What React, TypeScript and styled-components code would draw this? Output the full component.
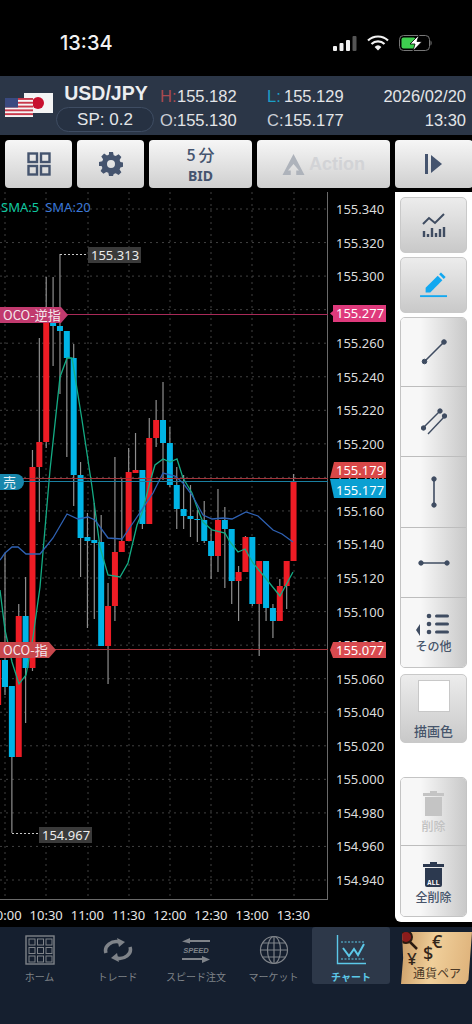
import React from 'react';
import styled, { createGlobalStyle } from 'styled-components';

const SANS = `"Liberation Sans", "Noto Sans CJK JP", sans-serif`;
const NOTO = `"Noto Sans", "Noto Sans CJK JP", sans-serif`;
const CJK = `"Noto Sans CJK JP", sans-serif`;

// idx, wick top, body top, body bottom, wick bottom, up?
type Candle = [number, number, number, number, number, boolean];
const candles: Candle[] = [
  [-1, 650, 660, 705, 705, true],
  [0, 553, 660, 687, 695, false],
  [1, 686, 686, 757, 833, false],
  [2, 604, 616, 757, 757, true],
  [3, 577, 616, 668, 723, false],
  [4, 450, 467, 668, 671, true],
  [5, 338, 442, 467, 522, true],
  [6, 277, 315, 442, 448, true],
  [7, 277, 318, 326, 366, false],
  [8, 254, 326, 331, 394, false],
  [9, 331, 331, 358, 457, false],
  [10, 344, 358, 475, 506, false],
  [11, 462, 475, 538, 577, false],
  [12, 513, 537, 541, 628, false],
  [13, 503, 540, 543, 619, false],
  [14, 515, 542, 646, 646, false],
  [15, 583, 606, 646, 684, true],
  [16, 457, 552, 606, 621, true],
  [17, 479, 541, 552, 552, true],
  [18, 448, 472, 541, 541, true],
  [19, 433, 470, 473, 473, true],
  [20, 470, 470, 524, 529, false],
  [21, 418, 438, 524, 524, true],
  [22, 400, 420, 438, 447, true],
  [23, 382, 420, 443, 480, false],
  [24, 427, 443, 485, 487, false],
  [25, 467, 485, 509, 529, false],
  [26, 475, 509, 516, 529, false],
  [27, 485, 516, 519, 537, false],
  [28, 510, 519, 520, 542, false],
  [29, 501, 520, 541, 543, false],
  [30, 530, 541, 556, 579, false],
  [31, 489, 520, 556, 572, true],
  [32, 507, 520, 529, 588, false],
  [33, 529, 529, 581, 604, false],
  [34, 566, 572, 581, 621, true],
  [35, 536, 537, 572, 572, true],
  [36, 537, 537, 604, 606, false],
  [37, 561, 561, 604, 656, true],
  [38, 561, 561, 608, 621, false],
  [39, 604, 608, 621, 638, false],
  [40, 579, 586, 621, 621, true],
  [41, 561, 561, 586, 609, true],
  [42, 474, 482, 561, 561, true],
];

const sma5 =
  '0,590 5,630 12,662 19,684 26,675 33,637 40,587 50,470 60,377 67,358 72,358 82,420 92,487 100,547 108,575 120,577 128,563 137,525 142,513 150,482 155,465 163,459 170,462 177,459 183,478 192,493 198,510 203,522 212,530 225,533 230,542 238,552 245,549 253,563 263,575 280,596 293,572';
const sma20 =
  '0,560 5,553 12,547 18,547 26,554 40,554 53,538 67,514 78,519 88,517 95,520 108,538 122,539 137,517 153,493 163,473 175,476 183,483 192,495 203,515 212,519 223,518 232,519 246,512 258,516 273,530 282,534 293,542';

const prices = ['155.340', '155.320', '155.300', '155.280', '155.260', '155.240', '155.220', '155.200', '155.180', '155.160', '155.140', '155.120', '155.100', '155.080', '155.060', '155.040', '155.020', '155.000', '154.980', '154.960', '154.940'];
const times = ['10:00', '10:30', '11:00', '11:30', '12:00', '12:30', '13:00', '13:30'];
const gridX = [5, 46, 88, 129, 170, 211, 252, 294];
const gridY = prices.map((_, i) => 209 + i * 33.55);

const GlobalStyle = createGlobalStyle`
  html, body { margin: 0; padding: 0; background: #000; }
  * { box-sizing: border-box; }
`;

const Page = styled.div`
  width: 472px;
  height: 1024px;
  background: #000;
  overflow: hidden;
  display: flex;
  flex-direction: column;
  position: relative;
  font-family: ${SANS};
`;

const StatusBar = styled.div`
  height: 76px;
  flex: none;
  display: flex;
  align-items: flex-start;
  justify-content: space-between;
  padding: 32px 39px 0 60px;
  color: #f2f2f2;
`;

const Clock = styled.div`
  font-size: 20px;
  line-height: 23px;
  font-weight: 500;
  font-family: "Inter", ${SANS};
`;

const StatusIcons = styled.div`
  display: flex;
  align-items: center;
  gap: 10px;
  height: 22px;
`;

const Header = styled.div`
  height: 59px;
  flex: none;
  background: #2b3647;
  display: flex;
  color: #e3e5e8;
`;

const Flags = styled.svg`
  width: 56px;
  height: 59px;
  flex: none;
`;

const PairColumn = styled.div`
  width: 100px;
  flex: none;
  display: flex;
  flex-direction: column;
  align-items: center;
  padding-top: 5px;
`;

const PairName = styled.div`
  font-size: 19.5px;
  line-height: 24px;
  font-weight: 700;
  color: #eceef0;
  margin-left: 0;
`;

const Spread = styled.div`
  width: 98px;
  height: 25px;
  border: 1px solid #3f4d63;
  border-radius: 13px;
  background: #263142;
  text-align: center;
  font-size: 17px;
  line-height: 23px;
  margin-top: 2px;
  margin-left: -2px;
`;

const QuoteGrid = styled.div`
  flex: none;
  width: 316px;
  padding: 8px 6px 0 4px;
  display: grid;
  grid-template-columns: 107px 100px 1fr;
  grid-auto-rows: 24px;
  font-size: 16.5px;
  line-height: 24px;
`;

const Quote = styled.div`
  white-space: nowrap;
`;

const QuoteKey = styled.span<{ $color?: string }>`
  color: ${(p) => p.$color || '#c9ced6'};
  display: inline-block;
  width: 17px;
`;

const DateCell = styled.div`
  text-align: right;
  white-space: nowrap;
`;

const Toolbar = styled.div`
  height: 57px;
  flex: none;
  display: flex;
  gap: 5px;
  padding: 5px 0 4px 5px;
`;

const ToolButton = styled.div<{ $w: number }>`
  width: ${(p) => p.$w}px;
  flex: none;
  border-radius: 4px;
  background: linear-gradient(#f6f6f6, #cfcfcf);
  color: #45546e;
  display: flex;
  flex-direction: column;
  align-items: center;
  justify-content: center;
`;

const ToolTop = styled.div`
  font-size: 16px;
  line-height: 20px;
  font-weight: 500;
  font-family: ${CJK};
  letter-spacing: 3px;
  margin-right: -3px;
`;

const ToolBottom = styled.div`
  font-size: 14px;
  line-height: 18px;
  font-weight: 700;
  font-family: ${NOTO};
  margin-top: 3px;
`;

const ActionButton = styled(ToolButton)`
  flex-direction: row;
  gap: 4px;
  color: #d2d3d6;
  font-size: 18px;
  font-weight: 700;
  font-family: ${SANS};
`;

const Main = styled.div`
  flex: 1;
  display: flex;
  min-height: 0;
`;

const ChartColumn = styled.div`
  width: 395px;
  flex: none;
  position: relative;
  display: flex;
  flex-direction: column;
`;

const ChartRow = styled.div`
  height: 708px;
  flex: none;
  display: flex;
`;

const Plot = styled.svg`
  width: 328px;
  height: 708px;
  flex: none;
  display: block;
`;

const PriceAxis = styled.div`
  flex: 1;
  padding: 7px 0 0 8px;
  font-family: ${NOTO};
  font-size: 13px;
  color: #dcdcdc;
`;

const PriceLabel = styled.div`
  height: 33.55px;
  line-height: 20px;
`;

const TimeAxis = styled.div`
  width: 328px;
  display: flex;
  margin-left: -15.6px;
  padding-top: 5px;
  font-family: ${NOTO};
  font-size: 13px;
  line-height: 20px;
  color: #e6e6e6;
`;

const TimeLabel = styled.div`
  width: 41.2px;
  flex: none;
  text-align: center;
`;

const Legend = styled.div`
  position: absolute;
  left: 1px;
  top: 7px;
  display: flex;
  gap: 6px;
  font-family: ${NOTO};
  font-size: 13px;
  line-height: 16px;
`;

const LegendItem = styled.span<{ $color: string }>`
  color: ${(p) => p.$color};
`;

const ValueTag = styled.div<{ $left: number; $top: number }>`
  position: absolute;
  left: ${(p) => p.$left}px;
  top: ${(p) => p.$top}px;
  height: 16px;
  padding: 0 2px 0 3px;
  background: #3a3a3a;
  color: #ececec;
  font-family: ${NOTO};
  font-size: 13px;
  line-height: 16px;
`;

const OrderTag = styled.div<{ $top: number; $bg: string; $w: number }>`
  position: absolute;
  left: 0;
  top: ${(p) => p.$top}px;
  width: ${(p) => p.$w}px;
  height: 16px;
  background: ${(p) => p.$bg};
  clip-path: polygon(0 0, calc(100% - 7px) 0, 100% 50%, calc(100% - 7px) 100%, 0 100%);
  color: #f4e8ec;
  font-family: ${CJK};
  font-size: 13px;
  line-height: 16px;
  padding-left: 3px;
  white-space: nowrap;
`;

const SellTag = styled.div`
  position: absolute;
  left: 0;
  top: 282px;
  width: 24px;
  height: 16px;
  background: #1786ab;
  border-radius: 0 8px 8px 0;
  color: #e8f4f8;
  font-family: ${CJK};
  font-size: 13px;
  line-height: 16px;
  padding-left: 3px;
`;

const AxisTag = styled.div<{ $top: number; $h: number; $bg: string; $clip: string; $pt?: number }>`
  position: absolute;
  left: 330px;
  top: ${(p) => p.$top}px;
  width: 56px;
  height: ${(p) => p.$h}px;
  background: ${(p) => p.$bg};
  clip-path: polygon(${(p) => p.$clip});
  color: #fff;
  font-family: ${NOTO};
  font-size: 13px;
  line-height: 16px;
  padding: ${(p) => p.$pt || 0}px 0 0 6px;
`;

const SidePanel = styled.div`
  width: 77px;
  height: 730px;
  flex: none;
  background: #fff;
  border-radius: 0 0 0 6px;
  padding: 5px;
  display: flex;
  flex-direction: column;
`;

const SideButton = styled.div<{ $h: number; $mt?: number }>`
  height: ${(p) => p.$h}px;
  margin-top: ${(p) => p.$mt || 0}px;
  flex: none;
  border: 1px solid #c9c9c9;
  border-radius: 5px;
  background: linear-gradient(#ececec, #c9c9c9);
  display: flex;
  flex-direction: column;
  align-items: center;
  justify-content: center;
`;

const SideGroup = styled.div<{ $mt: number }>`
  margin-top: ${(p) => p.$mt}px;
  flex: none;
  border: 1px solid #c4c4c4;
  border-radius: 5px;
  overflow: hidden;
  display: flex;
  flex-direction: column;
`;

const GroupCell = styled.div<{ $h: number; $pt?: number }>`
  height: ${(p) => p.$h}px;
  flex: none;
  padding-top: ${(p) => p.$pt || 0}px;
  background: linear-gradient(90deg, #f7f7f7 30%, #c9c9c9);
  border-bottom: 1px solid #bdbdbd;
  display: flex;
  flex-direction: column;
  align-items: center;
  justify-content: center;
  &:last-child { border-bottom: 0; }
`;

const SideLabel = styled.div<{ $dim?: boolean; $size?: number }>`
  font-family: ${CJK};
  font-size: ${(p) => p.$size || 12}px;
  line-height: 15px;
  font-weight: 500;
  margin-top: 2px;
  color: ${(p) => (p.$dim ? '#c2c2c2' : '#47556b')};
`;

const Swatch = styled.div`
  width: 32px;
  height: 32px;
  background: #fff;
  border: 1px solid #c8c8c8;
  margin-bottom: 9px;
`;

const TabBar = styled.div`
  position: absolute;
  left: 0;
  top: 927px;
  width: 472px;
  height: 97px;
  background: #151f2f;
  display: flex;
  align-items: flex-start;
  padding-left: 1px;
`;

const Tab = styled.div<{ $w: number; $active?: boolean }>`
  width: ${(p) => p.$w}px;
  height: 57px;
  flex: none;
  border-radius: 3px;
  background: ${(p) => (p.$active ? '#2d3849' : 'transparent')};
  color: ${(p) => (p.$active ? '#5cc8e8' : '#7f8389')};
  display: flex;
  flex-direction: column;
  align-items: center;
  padding-top: 8px;
  font-family: ${CJK};
  font-size: 10px;
  font-weight: ${(p) => (p.$active ? 700 : 400)};
  line-height: 14px;
  white-space: nowrap;
`;

const TabIcon = styled.svg`
  width: 30px;
  height: 30px;
  margin-bottom: 5px;
  flex: none;
`;

const PairTab = styled.div`
  position: absolute;
  left: 401px;
  top: 5px;
  width: 71px;
  height: 52px;
  background: linear-gradient(100deg, #c99a63, #f0cf9a 45%, #ddb078);
  clip-path: polygon(1px 0, 100% 0, 95% 92%, 91% 100%, 0 100%, 3% 50%);
  font-family: ${CJK};
`;

const PairCaption = styled.div`
  position: absolute;
  left: 12px;
  bottom: 4px;
  font-size: 12px;
  line-height: 15px;
  color: #4a3826;
  white-space: nowrap;
`;

const Currency = styled.span<{ $x: number; $y: number; $s: number }>`
  position: absolute;
  left: ${(p) => p.$x}px;
  top: ${(p) => p.$y}px;
  font-size: ${(p) => p.$s}px;
  line-height: 1;
  font-weight: 500;
  font-family: ${NOTO};
  color: #33261a;
`;

const Lens = styled.svg`
  position: absolute;
  left: 0;
  top: 0;
  width: 20px;
  height: 18px;
`;

const candleX = (i: number) => 5 + 6.87 * i;

function ChartSvg() {
  return (
    <Plot viewBox="0 192 328 708">
      {gridY.map((y) => (
        <line key={y} x1={0} x2={327} y1={y} y2={y} stroke="#404040" strokeDasharray="2 4" />
      ))}
      {gridX.map((x) => (
        <line key={x} x1={x} x2={x} y1={192} y2={900} stroke="#404040" strokeDasharray="2 4" />
      ))}
      <line x1={327.5} x2={327.5} y1={192} y2={900} stroke="#6a6a6a" />
      <line x1={0} x2={328} y1={899.5} y2={899.5} stroke="#6a6a6a" />
      {candles.map(([i, wt, bt, bb, wb, up]) => {
        const x = candleX(i);
        return (
          <g key={i}>
            <line x1={x} x2={x} y1={wt} y2={wb} stroke="#8e8e8e" strokeWidth={1.2} />
            <rect x={x - 3} y={bt} width={6} height={Math.max(bb - bt, 1)} fill={up ? '#ee1c25' : '#00b4e6'} />
          </g>
        );
      })}
      <polyline points="60,254.5 88,254.5" fill="none" stroke="#c8c8c8" strokeDasharray="2 2" />
      <polyline points="12,833.5 40,833.5" fill="none" stroke="#c8c8c8" strokeDasharray="2 2" />
      <polyline points={sma5} fill="none" stroke="#14ac85" strokeWidth={1.3} />
      <polyline points={sma20} fill="none" stroke="#2f62b4" strokeWidth={1.3} />
      <line x1={0} x2={328} y1={314.5} y2={314.5} stroke="#a82a58" />
      <line x1={0} x2={328} y1={649.5} y2={649.5} stroke="#a0343a" />
      <line x1={0} x2={328} y1={478.5} y2={478.5} stroke="#a0343a" />
      <line x1={0} x2={328} y1={481.5} y2={481.5} stroke="#1a7fa0" />
    </Plot>
  );
}

const App = () => (
  <>
    <GlobalStyle />
    <Page>
      <StatusBar>
        <Clock>13:34</Clock>
        <StatusIcons>
          <svg width="24" height="15" viewBox="0 0 24 15">
            <rect x="0" y="10" width="4" height="5" rx="1" fill="#f2f2f2" />
            <rect x="6.5" y="7" width="4" height="8" rx="1" fill="#f2f2f2" />
            <rect x="13" y="4" width="4" height="11" rx="1" fill="#f2f2f2" />
            <rect x="19.5" y="0" width="4" height="15" rx="1" fill="#555" />
          </svg>
          <svg width="22" height="16" viewBox="0 0 22 16">
            <path d="M1 5.5a14.5 14.5 0 0 1 20 0" fill="none" stroke="#f2f2f2" strokeWidth="2.2" />
            <path d="M4.5 9a9.5 9.5 0 0 1 13 0" fill="none" stroke="#f2f2f2" strokeWidth="2.2" />
            <path d="M11 15.5l-3.4-3.6a5 5 0 0 1 6.8 0z" fill="#f2f2f2" />
          </svg>
          <svg width="34" height="16" viewBox="0 0 34 16">
            <rect x="0.5" y="0.5" width="30" height="15" rx="4" fill="none" stroke="#777" />
            <rect x="2.5" y="2.5" width="14" height="11" rx="2" fill="#3ecf4f" />
            <path d="M31.5 5.5c1.5.4 1.5 4.6 0 5z" fill="#777" />
            <path d="M20 0L11 9h5l-2 7 9-9.5h-5z" fill="#fff" stroke="#000" strokeWidth="0.8" />
          </svg>
        </StatusIcons>
      </StatusBar>

      <Header>
        <Flags viewBox="0 0 56 59">
          <rect x="24" y="17" width="29" height="20" fill="#f4f4f4" />
          <circle cx="38" cy="27" r="6" fill="#c8102e" />
          <rect x="5" y="22" width="28" height="19" fill="#f5f5f5" />
          {[0, 2, 4, 6, 8].map((s) => (
            <rect key={s} x="5" y={22 + s * 1.9} width="28" height="1.9" fill="#c8384a" />
          ))}
          <rect x="5" y="22" width="13" height="9.5" fill="#3a4a80" />
        </Flags>
        <PairColumn>
          <PairName>USD/JPY</PairName>
          <Spread>SP: 0.2</Spread>
        </PairColumn>
        <QuoteGrid>
          <Quote><QuoteKey $color="#a84a50">H:</QuoteKey>155.182</Quote>
          <Quote><QuoteKey $color="#1b9fc7">L:</QuoteKey>155.129</Quote>
          <DateCell>2026/02/20</DateCell>
          <Quote><QuoteKey>O:</QuoteKey>155.130</Quote>
          <Quote><QuoteKey>C:</QuoteKey>155.177</Quote>
          <DateCell>13:30</DateCell>
        </QuoteGrid>
      </Header>

      <Toolbar>
        <ToolButton $w={67}>
          <svg width="24" height="24" viewBox="0 0 24 24" fill="none" stroke="#45546e" strokeWidth="2.4">
            <rect x="1.5" y="1.5" width="8.5" height="8.5" />
            <rect x="14" y="1.5" width="8.5" height="8.5" />
            <rect x="1.5" y="14" width="8.5" height="8.5" />
            <rect x="14" y="14" width="8.5" height="8.5" />
          </svg>
        </ToolButton>
        <ToolButton $w={67}>
          <svg width="24" height="24" viewBox="0 0 24 24" fill="#45546e">
            <path fillRule="evenodd" d="M10 0h4l.7 3.3 2 .8L19.600 2.300l2.800 2.800-1.800 2.900.8 2 3.300.700v4l-3.300.700-.8 2 1.800 2.900-2.800 2.800-2.900-1.800-2 .8L14 24h-4l-.7-3.300-2-.8-2.900 1.800-2.800-2.800 1.800-2.900-.8-2L0 14v-4l3.300-.7.8-2L2.300 4.400l2.800-2.800L8 3.400l2-.8zM12 8a4 4 0 1 0 0 8 4 4 0 0 0 0-8z" />
          </svg>
        </ToolButton>
        <ToolButton $w={103}>
          <ToolTop>5分</ToolTop>
          <ToolBottom>BID</ToolBottom>
        </ToolButton>
        <ActionButton $w={133}>
          <svg width="23" height="22" viewBox="0 0 24 24" fill="#aeb3bb">
            <path fillRule="evenodd" d="M12 1L24 24H15V19H18L12 12L6 19H9V24H0z" />
          </svg>
          Action
        </ActionButton>
        <ToolButton $w={78}>
          <svg width="18" height="20" viewBox="0 0 18 20" fill="#45546e">
            <rect x="0" y="0" width="3" height="20" />
            <path d="M6 1l11 9-11 9z" />
          </svg>
        </ToolButton>
      </Toolbar>

      <Main>
        <ChartColumn>
          <ChartRow>
            <ChartSvg />
            <PriceAxis>
              {prices.map((p) => (
                <PriceLabel key={p}>{p}</PriceLabel>
              ))}
            </PriceAxis>
          </ChartRow>
          <TimeAxis>
            {times.map((t) => (
              <TimeLabel key={t}>{t}</TimeLabel>
            ))}
          </TimeAxis>
          <Legend>
            <LegendItem $color="#10c9a0">SMA:5</LegendItem>
            <LegendItem $color="#3a78d8">SMA:20</LegendItem>
          </Legend>
          <ValueTag $left={88} $top={55}>155.313</ValueTag>
          <ValueTag $left={39} $top={635}>154.967</ValueTag>
          <OrderTag $top={115} $bg="#c13a6e" $w={68}>OCO-逆指</OrderTag>
          <OrderTag $top={450} $bg="#c8474c" $w={56}>OCO-指</OrderTag>
          <SellTag>売</SellTag>
          <AxisTag $top={113} $h={17} $bg="#df3a7c" $clip="3px 0, 100% 0, 100% 100%, 3px 100%, 3px 65%, 0 50%, 3px 35%">155.277</AxisTag>
          <AxisTag $top={270} $h={16} $bg="#d94848" $clip="4px 0, 100% 0, 100% 100%, 0 100%">155.179</AxisTag>
          <AxisTag $top={287} $h={19} $pt={3} $bg="#0ba0d2" $clip="0 0, 100% 0, 100% 100%, 4px 100%">155.177</AxisTag>
          <AxisTag $top={450} $h={16} $bg="#d84a4f" $clip="3px 0, 100% 0, 100% 100%, 3px 100%, 0 50%">155.077</AxisTag>
        </ChartColumn>

        <SidePanel>
          <SideButton $h={56}>
            <svg width="26" height="26" viewBox="0 0 26 26" fill="none" stroke="#3f4c61">
              <path d="M2 12l6-6 6 5 9-9" strokeWidth="2" />
              <path d="M3 25v-6M7 25v-3M11 25v-9M15 25v-4M19 25v-8M23 25v-10" strokeWidth="2.4" />
            </svg>
          </SideButton>
          <SideButton $h={56} $mt={4}>
            <svg width="30" height="26" viewBox="0 0 30 28" fill="#12a8f0">
              <path d="M6 17L19 4l5 5-13 13H6z" />
              <path d="M20.500 2.500l2-2 5 5-2 2z" />
              <rect x="0" y="25" width="29" height="2" />
            </svg>
          </SideButton>
          <SideGroup $mt={4}>
            <GroupCell $h={69}>
              <svg width="26" height="26" viewBox="0 0 26 26" fill="#3f4c61" stroke="#3f4c61">
                <line x1="3" y1="23" x2="23" y2="3" strokeWidth="1.6" />
                <circle cx="3.500" cy="22.500" r="2.300" />
                <circle cx="23" cy="3" r="2.300" />
              </svg>
            </GroupCell>
            <GroupCell $h={70}>
              <svg width="26" height="28" viewBox="0 0 26 28" fill="#3f4c61" stroke="#3f4c61">
                <line x1="2" y1="20" x2="19" y2="3" strokeWidth="1.4" />
                <line x1="7" y1="26" x2="24" y2="8" strokeWidth="1.4" />
                <circle cx="2.500" cy="20" r="2.200" />
                <circle cx="19" cy="3" r="2.200" />
                <circle cx="23.500" cy="8" r="2.200" />
              </svg>
            </GroupCell>
            <GroupCell $h={71}>
              <svg width="10" height="32" viewBox="0 0 10 32" fill="#3f4c61" stroke="#3f4c61">
                <line x1="5" y1="3" x2="5" y2="29" strokeWidth="1.6" />
                <circle cx="5" cy="3" r="2.200" />
                <circle cx="5" cy="29" r="2.200" />
              </svg>
            </GroupCell>
            <GroupCell $h={70}>
              <svg width="32" height="10" viewBox="0 0 32 10" fill="#3f4c61" stroke="#3f4c61">
                <line x1="3" y1="5" x2="29" y2="5" strokeWidth="1.6" />
                <circle cx="3" cy="5" r="2.200" />
                <circle cx="29" cy="5" r="2.200" />
              </svg>
            </GroupCell>
            <GroupCell $h={69}>
              <svg width="36" height="24" viewBox="0 0 36 24" fill="#3f4c61">
                <path d="M4 12L0 18l4 6z" />
                <circle cx="13" cy="4" r="2.300" />
                <circle cx="13" cy="12" r="2.300" />
                <circle cx="13" cy="20" r="2.300" />
                <rect x="19" y="2.500" width="14" height="3" rx="1.500" />
                <rect x="19" y="10.500" width="14" height="3" rx="1.500" />
                <rect x="19" y="18.500" width="14" height="3" rx="1.500" />
              </svg>
              <SideLabel>その他</SideLabel>
            </GroupCell>
          </SideGroup>
          <SideButton $h={69} $mt={6}>
            <Swatch />
            <SideLabel $size={13}>描画色</SideLabel>
          </SideButton>
          <SideGroup $mt={34}>
            <GroupCell $h={68}>
              <svg width="21" height="25" viewBox="0 0 21 25" fill="#c4c4c4">
                <rect x="7" y="0" width="7" height="2" />
                <rect x="0" y="2" width="21" height="3" />
                <rect x="2" y="6" width="17" height="19" />
              </svg>
              <SideLabel $dim>削除</SideLabel>
            </GroupCell>
            <GroupCell $h={70} $pt={4}>
              <svg width="21" height="25" viewBox="0 0 21 25">
                <rect x="7" y="0" width="7" height="2" fill="#2c394f" />
                <rect x="0" y="2" width="21" height="3" fill="#2c394f" />
                <path d="M2 6h17v17a2 2 0 0 1-2 2H4a2 2 0 0 1-2-2z" fill="#2c394f" />
                <text x="10.500" y="22.500" textAnchor="middle" fontSize="7" fontWeight="700" fill="#fff" fontFamily="Liberation Mono">ALL</text>
              </svg>
              <SideLabel>全削除</SideLabel>
            </GroupCell>
          </SideGroup>
        </SidePanel>
      </Main>

      <TabBar>
        <Tab $w={77}>
          <TabIcon viewBox="0 0 30 30" fill="none" stroke="#7f8389">
            <rect x="1" y="1" width="28" height="28" strokeWidth="1.4" />
            {[4, 12.5, 21].map((y) =>
              [4, 12.5, 21].map((x) => <rect key={`${x}${y}`} x={x} y={y} width="6" height="6" />),
            )}
          </TabIcon>
          ホーム
        </Tab>
        <Tab $w={79}>
          <TabIcon viewBox="0 0 30 30" fill="none" stroke="#7f8389" strokeWidth="3.500">
            <path d="M3 18A11 9 0 0 1 17 7" />
            <path d="M27 12A11 9 0 0 1 13 23" />
            <path d="M14 3l8 4-6 5z" fill="#7f8389" stroke="none" />
            <path d="M16 27l-8-4 6-5z" fill="#7f8389" stroke="none" />
          </TabIcon>
          トレード
        </Tab>
        <Tab $w={78}>
          <TabIcon viewBox="0 0 30 30" fill="#7f8389">
            <path d="M29 5H9V3L1 6.500l8 2V7h20zM1 23h20v-2l8 3.500-8 3.500v-3H1z" />
            <text x="15" y="18" textAnchor="middle" fontSize="7.5" fontWeight="700" fontStyle="italic" fontFamily="Liberation Sans">SPEED</text>
          </TabIcon>
          スピード注文
        </Tab>
        <Tab $w={77}>
          <TabIcon viewBox="0 0 30 30" fill="none" stroke="#7f8389" strokeWidth="1.200">
            <circle cx="15" cy="15" r="13.500" />
            <ellipse cx="15" cy="15" rx="6.500" ry="13.500" />
            <path d="M15 1.500v27M1.500 15h27M3.500 8h23M3.500 22h23" />
          </TabIcon>
          マーケット
        </Tab>
        <Tab $w={78} $active>
          <TabIcon viewBox="0 0 30 30" fill="none" stroke="#5cc8e8">
            <path d="M1.500 0v28.500H30" strokeWidth="1.400" />
            <path d="M5 7h24M5 24h24" strokeDasharray="2 1.500" />
            <path d="M7 13l6 8 5-7 4 6 6-11" strokeWidth="2" />
          </TabIcon>
          チャート
        </Tab>
        <PairTab>
          <Lens viewBox="0 0 20 18">
            <path d="M9 10l7 7" stroke="#2a1a10" strokeWidth="2.500" />
            <circle cx="5" cy="5" r="6" fill="#8c1c1c" stroke="#2a1a10" strokeWidth="2" />
          </Lens>
          <Currency $x={31} $y={0} $s={18}>€</Currency>
          <Currency $x={22} $y={12} $s={18}>$</Currency>
          <Currency $x={6} $y={18} $s={17}>¥</Currency>
          <PairCaption>通貨ペア</PairCaption>
        </PairTab>
      </TabBar>
    </Page>
  </>
);

export default App;
